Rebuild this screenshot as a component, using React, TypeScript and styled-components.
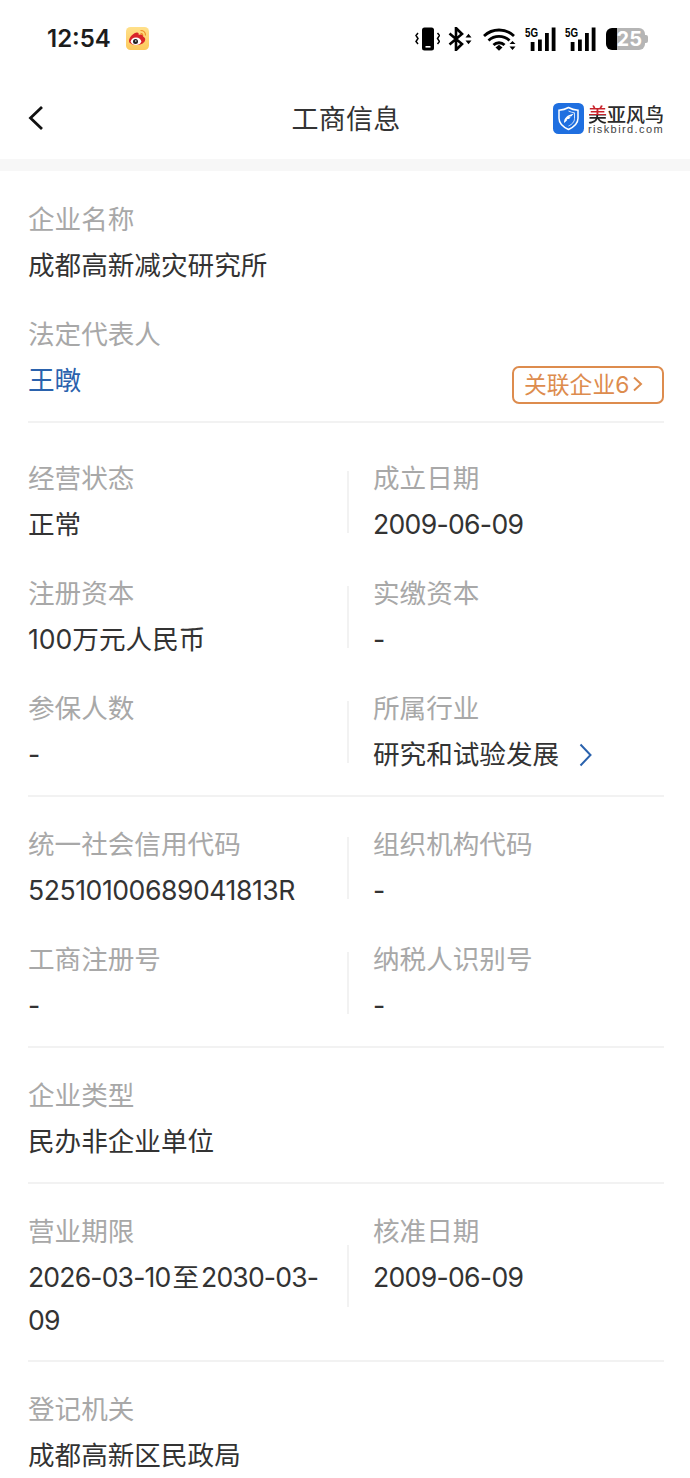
import styled, { createGlobalStyle } from 'styled-components';

const GlobalStyle = createGlobalStyle`
  html, body {
    margin: 0;
    padding: 0;
    background: #fff;
  }
  #root {
    height: 1478px;
    overflow: hidden;
  }
`;

const Page = styled.div`
  width: 690px;
  background: #fff;
  font-family: Inter, "Noto Sans CJK SC", sans-serif;
`;

const StatusBar = styled.div`
  height: 77px;
  box-sizing: border-box;
  padding: 0 42px 0 47px;
  display: flex;
  align-items: center;
`;

const Clock = styled.span`
  font-size: 24px;
  font-weight: 600;
  color: #1c1c1c;
  margin-right: 15px;
`;

const StatusIcons = styled.div`
  margin-left: auto;
  display: flex;
  align-items: center;
  gap: 8px;
`;

const Battery = styled.div`
  position: relative;
  width: 36px;
  height: 22px;
  margin: 0 3px 0 2px;
  padding-right: 3px;
  border-radius: 6px;
  background: linear-gradient(to right, #000 0 11px, #b5b5b5 11px);
  color: #fff;
  font-size: 20px;
  font-weight: 700;
  line-height: 22px;
  text-align: right;

  &::after {
    content: '';
    position: absolute;
    right: -3px;
    top: 7px;
    width: 3px;
    height: 8px;
    border-radius: 0 2px 2px 0;
    background: #b5b5b5;
  }
`;

const NavBar = styled.div`
  height: 82px;
  box-sizing: border-box;
  padding: 0 26px 0 28px;
  display: grid;
  grid-template-columns: 1fr auto 1fr;
  align-items: center;
`;

const BackButton = styled.div`
  display: flex;
  align-items: center;
`;

const Title = styled.div`
  font-size: 27px;
  line-height: 36px;
  margin-top: 4px;
  color: #333;
  letter-spacing: 0.3px;
`;

const Brand = styled.div`
  justify-self: end;
  display: flex;
  align-items: center;
  gap: 4px;
`;

const BrandText = styled.div`
  display: flex;
  flex-direction: column;
  gap: 1px;
  padding-top: 3px;
`;

const BrandName = styled.div`
  font-family: "Noto Sans CJK SC", sans-serif;
  font-size: 19px;
  line-height: 18px;
  font-weight: 500;
  color: #2c2c2c;
`;

const BrandRed = styled.span`
  background: linear-gradient(to bottom, #c8222a 55%, #222 55%);
  -webkit-background-clip: text;
  background-clip: text;
  color: transparent;
`;

const BrandUrl = styled.div`
  font-family: "Liberation Sans", sans-serif;
  font-size: 11px;
  line-height: 10px;
  letter-spacing: 1.4px;
  white-space: nowrap;
  color: #444;
`;

const Strip = styled.div`
  height: 12px;
  background: #f7f7f7;
`;

const Content = styled.div`
  padding: 0 26px 0 28px;
`;

const Section = styled.section<{ $top: number; $bottom?: number; $last?: boolean }>`
  padding: ${(p) => p.$top}px 0 ${(p) => (p.$last ? 0 : p.$bottom ?? 19)}px;
  display: flex;
  flex-direction: column;
  gap: 26px;
  border-bottom: ${(p) => (p.$last ? 'none' : '2px solid #f2f2f2')};
`;

const Row = styled.div`
  display: grid;
  grid-template-columns: 319px 317px;
`;

const Cell = styled.div<{ $right?: boolean }>`
  position: relative;
  min-width: 0;
  padding-left: ${(p) => (p.$right ? 26 : 0)}px;

  ${(p) =>
    p.$right &&
    `&::before {
      content: '';
      position: absolute;
      left: 0;
      top: 50%;
      margin-top: -31px;
      width: 2px;
      height: 62px;
      background: #f2f2f2;
    }`}
`;

const Label = styled.div`
  font-size: 26.6px;
  line-height: 42px;
  color: #a8a8a8;
  margin-bottom: 4px;
`;

const Value = styled.div<{ $link?: boolean; $tight?: number }>`
  font-size: 26.6px;
  line-height: 43px;
  letter-spacing: ${(p) => (p.$tight ? -p.$tight : 0)}px;
  color: ${(p) => (p.$link ? '#2a62ad' : '#333')};
`;

const RangeWord = styled.span`
  margin: 0 2px;
  letter-spacing: 0;
`;

const ValueRow = styled.div`
  display: flex;
  justify-content: space-between;
  align-items: flex-start;
`;

const RelatedTag = styled.div`
  box-sizing: border-box;
  height: 38px;
  width: 152px;
  margin: 7px 0 -3px;
  padding: 0 0 3px 10px;
  display: flex;
  align-items: center;
  gap: 3px;
  border: 2px solid #dd8c4e;
  border-radius: 7px;
  color: #dd8c4e;
  font-size: 22.8px;
`;

const IndustryValue = styled(Value)`
  display: flex;
  align-items: center;
  gap: 20px;
`;

const Phone = () => (
  <svg width="25" height="24" viewBox="0 0 25 24">
    <rect x="7" y="0.5" width="12" height="23" rx="2.5" fill="#000" />
    <rect x="10.5" y="19" width="5" height="1.6" fill="#fff" />
    <path d="M3 6l-2 2.5 2 3-2 3 2 2.5M22.5 6l2 2.5-2 3 2 3-2 2.5" fill="none" stroke="#000" strokeWidth="1.5" />
  </svg>
);

const Bluetooth = () => (
  <svg width="27" height="24" viewBox="0 0 27 24">
    <path d="M1.5 6.5L14 17 8 23V1l6 6L1.5 17.5" fill="none" stroke="#000" strokeWidth="2.6" />
    <path d="M17.5 10.5l3-3.8 3 3.8zM17.5 13.5l3 3.8 3-3.8z" fill="#000" />
  </svg>
);

const Wifi = () => (
  <svg width="33" height="24" viewBox="0 0 33 24">
    <path d="M1 9C9.500 1 22.500 1 31 9M5.500 13.500C11.500 8 20.500 8 26.500 13.500M10.500 18C13.500 15 18.500 15 21.500 18" fill="none" stroke="#000" strokeWidth="2.8" />
    <path d="M12.500 20.500l3.500-2.800 3.500 2.800-3.500 3.300z" fill="#000" />
    <path d="M26.500 17l3-3 3 3zM26.500 19.500l3 3.500 3-3.500z" fill="#000" />
  </svg>
);

const Signal = () => (
  <svg width="32" height="24" viewBox="0 0 32 24">
    <text x="1" y="9.500" fontSize="12.500" fontWeight="700" fontFamily="Liberation Sans, sans-serif" fill="#000" textLength="13" lengthAdjust="spacingAndGlyphs">
      5G
    </text>
    <rect x="6.700" y="15" width="3.800" height="9" fill="#000" />
    <rect x="14" y="12.500" width="3.800" height="11.500" fill="#000" />
    <rect x="21" y="6" width="3.800" height="18" fill="#000" />
    <rect x="27.700" y="0.500" width="3.800" height="23.500" fill="#000" />
  </svg>
);

const Weibo = () => (
  <svg width="23" height="23" viewBox="0 0 23 23">
    <defs>
      <linearGradient id="weiboBg" x1="0" y1="0" x2="0" y2="1">
        <stop offset="0" stopColor="#ffe08a" />
        <stop offset="1" stopColor="#fdc95c" />
      </linearGradient>
    </defs>
    <rect width="23" height="23" rx="4.500" fill="url(#weiboBg)" />
    <path d="M3 14c0-4 5-8.500 8-8.500 1.500 0 2 1 1.700 2.500 3-1 5-.3 4.500 1.800 1.500.6 2 1.500 2 2.700 0 3-4 5.500-8 5.500-4.500 0-8.200-1.500-8.200-4z" fill="#d9252a" />
    <ellipse cx="10" cy="14.300" rx="5.200" ry="3.700" fill="#fff" />
    <circle cx="9.500" cy="14.500" r="2.500" fill="#222" />
    <circle cx="9.800" cy="14" r="0.700" fill="#fff" />
    <path d="M14.500 3.500c3 0 5 2 5 5M14.500 6.300c1.300 0 2.300 1 2.300 2.300" fill="none" stroke="#ee8f2b" strokeWidth="1.100" />
  </svg>
);

const BrandMark = () => (
  <svg width="31" height="31" viewBox="0 0 31 31">
    <rect width="31" height="31" rx="5.500" fill="#1f6fe0" />
    <path d="M15.500 4.500c3 1.700 6 2.500 9.500 2.800v8c0 5.200-4 8.700-9.500 11.200C10 24 6 20.500 6 15.300v-8c3.500-.3 6.500-1.100 9.500-2.800z" fill="none" stroke="#fff" strokeWidth="1.500" />
    <path d="M15.500 8c2 1 4 1.600 6 1.800v5.700c0 3.500-2.500 5.800-6 7.500" fill="none" stroke="#fff" strokeWidth="0.800" />
    <path d="M11 20c0-5 3-8 10-9.500-1.200 1-2 1.800-2.500 2.800l-3 .6 2 .3c-.5 1-1 1.400-2 1.800l-2-.1 1 .8c-1 1.200-2.200 2.300-3.500 3.300z" fill="#fff" />
  </svg>
);

export default function App() {
  return (
    <Page>
      <GlobalStyle />
      <StatusBar>
        <Clock>12:54</Clock>
        <Weibo />
        <StatusIcons>
          <Phone />
          <Bluetooth />
          <Wifi />
          <Signal />
          <Signal />
          <Battery>25</Battery>
        </StatusIcons>
      </StatusBar>
      <NavBar>
        <BackButton>
          <svg width="16" height="26" viewBox="0 0 16 26">
            <path d="M14 2L2.500 13 14 24" fill="none" stroke="#111" strokeWidth="2.800" />
          </svg>
        </BackButton>
        <Title>工商信息</Title>
        <Brand>
          <BrandMark />
          <BrandText>
            <BrandName>
              <BrandRed>美</BrandRed>亚风鸟
            </BrandName>
            <BrandUrl>riskbird.com</BrandUrl>
          </BrandText>
        </Brand>
      </NavBar>
      <Strip />
      <Content>
        <Section $top={27}>
          <div>
            <Label>企业名称</Label>
            <Value>成都高新减灾研究所</Value>
          </div>
          <div>
            <Label>法定代表人</Label>
            <ValueRow>
              <Value $link>王暾</Value>
              <RelatedTag>
                关联企业6
                <svg width="11" height="16" viewBox="0 0 11 16">
                  <path d="M2 1.500L9 8l-7 6.500" fill="none" stroke="#dd8c4e" strokeWidth="2" />
                </svg>
              </RelatedTag>
            </ValueRow>
          </div>
        </Section>
        <Section $top={34}>
          <Row>
            <Cell>
              <Label>经营状态</Label>
              <Value>正常</Value>
            </Cell>
            <Cell $right>
              <Label>成立日期</Label>
              <Value $tight={0.7}>2009-06-09</Value>
            </Cell>
          </Row>
          <Row>
            <Cell>
              <Label>注册资本</Label>
              <Value>100万元人民币</Value>
            </Cell>
            <Cell $right>
              <Label>实缴资本</Label>
              <Value>-</Value>
            </Cell>
          </Row>
          <Row>
            <Cell>
              <Label>参保人数</Label>
              <Value>-</Value>
            </Cell>
            <Cell $right>
              <Label>所属行业</Label>
              <IndustryValue>
                研究和试验发展
                <svg width="13" height="24" viewBox="0 0 13 24">
                  <path d="M1.500 1.500L11.500 12l-10 10.500" fill="none" stroke="#2a62ad" strokeWidth="2" />
                </svg>
              </IndustryValue>
            </Cell>
          </Row>
        </Section>
        <Section $top={26}>
          <Row>
            <Cell>
              <Label>统一社会信用代码</Label>
              <Value $tight={0.45}>52510100689041813R</Value>
            </Cell>
            <Cell $right>
              <Label>组织机构代码</Label>
              <Value>-</Value>
            </Cell>
          </Row>
          <Row>
            <Cell>
              <Label>工商注册号</Label>
              <Value>-</Value>
            </Cell>
            <Cell $right>
              <Label>纳税人识别号</Label>
              <Value>-</Value>
            </Cell>
          </Row>
        </Section>
        <Section $top={26}>
          <div>
            <Label>企业类型</Label>
            <Value>民办非企业单位</Value>
          </div>
        </Section>
        <Section $top={26} $bottom={18}>
          <Row>
            <Cell>
              <Label>营业期限</Label>
              <Value $tight={0.85}>
                2026-03-10<RangeWord>至</RangeWord>2030-03-09
              </Value>
            </Cell>
            <Cell $right>
              <Label>核准日期</Label>
              <Value $tight={0.7}>2009-06-09</Value>
            </Cell>
          </Row>
        </Section>
        <Section $top={26} $last>
          <div>
            <Label>登记机关</Label>
            <Value>成都高新区民政局</Value>
          </div>
        </Section>
      </Content>
    </Page>
  );
}
